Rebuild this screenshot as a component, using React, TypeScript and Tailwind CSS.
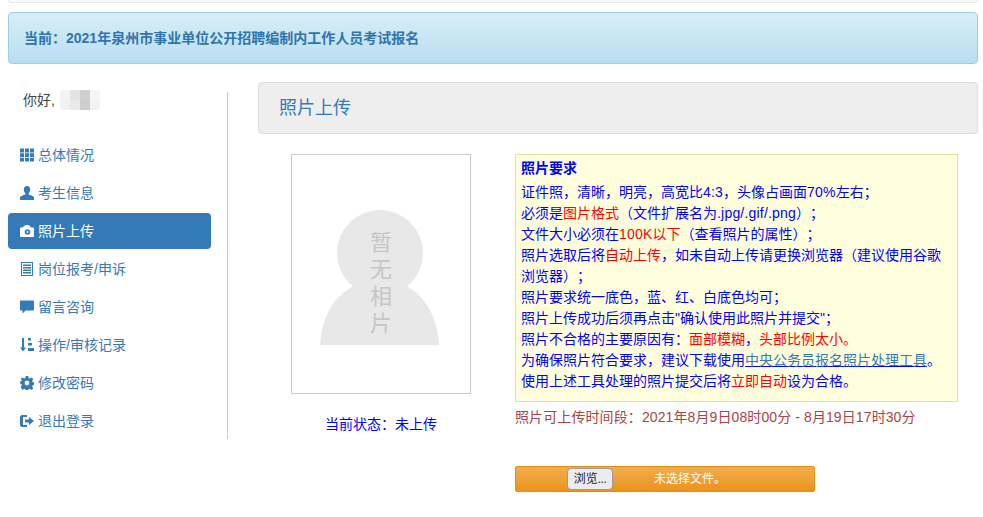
import type { ReactNode } from 'react';

const font = '[font-family:"Liberation_Sans","Noto_Sans_CJK_SC",sans-serif]';

function Svg({ children }: { children: ReactNode }) {
  return (
    <svg viewBox="0 0 14 14" className="w-[14px] h-[14px] shrink-0 fill-current">
      {children}
    </svg>
  );
}

const icons = {
  th: (
    <Svg>
      <path d="M0 .5h4V4.500H0zM5 .5h4V4.500H5zM10 .5h4V4.500h-4zM0 5.300h4v3.700H0zM5 5.300h4v3.700H5zM10 5.300h4v3.700h-4zM0 9.700h4v3.800H0zM5 9.700h4v3.800H5zM10 9.700h4v3.800h-4z" />
    </Svg>
  ),
  user: (
    <Svg>
      <path d="M7 0c2 0 3.200 1.500 3.200 3.600 0 1.600-.7 3-1.600 3.800v1.200c1.800.6 4.600 1.500 5.400 2.600V14H0v-2.800c.8-1.100 3.600-2 5.400-2.600V7.400c-.9-.8-1.600-2.200-1.600-3.800C3.800 1.500 5 0 7 0z" />
    </Svg>
  ),
  camera: (
    <Svg>
      <path
        fillRule="evenodd"
        d="M3.500 2.500 5.500 1h3.500l2 2.500h2c.6 0 1 .4 1 1V12c0 .6-.4 1-1 1H1c-.6 0-1-.4-1-1V4.500c0-.6.4-1 1-1h1.500zM7.500 5.200a2.800 2.800 0 1 0 0 5.600 2.800 2.800 0 0 0 0-5.600zm0 1.800a1 1 0 1 1 0 2 1 1 0 0 1 0-2z"
      />
    </Svg>
  ),
  list: (
    <Svg>
      <path
        fillRule="evenodd"
        d="M1 0h12v14H1zM2 1v12h10V1zM3 2.500h8V4H3zM3 5h8v1.500H3zM3 7.500h8V9H3zM3 10h8v1.500H3z"
      />
    </Svg>
  ),
  comment: (
    <Svg>
      <path d="M1 .5h12c.6 0 1 .4 1 1v8c0 .6-.4 1-1 1H5.500L2.500 13.500v-3H1c-.6 0-1-.4-1-1v-8c0-.6.4-1 1-1z" />
    </Svg>
  ),
  sort: (
    <Svg>
      <path d="M2 0h2v9.500h2L3 13.500 0 9.500h2zM8 0h3v2.500H8zM8 5h4v2.500H8zM8 10h6v3H8z" />
    </Svg>
  ),
  cog: (
    <Svg>
      <path
        fillRule="evenodd"
        d="M5.800 0h2.400l.4 2.100 1.200.5 1.800-1.200 1.700 1.700-1.200 1.800.5 1.200 1.900.4v2.400l-1.900.4-.5 1.200 1.200 1.800-1.700 1.700-1.800-1.200-1.200.5-.4 1.600H5.800l-.4-1.600-1.200-.5-1.800 1.200L.7 10.900l1.200-1.800-.5-1.200L-.5 7.500V5.600l1.900-.4.500-1.200L.7 3.100l1.700-1.700 1.800 1.200 1.200-.5zM7 4.600a2.400 2.400 0 1 0 0 4.800 2.400 2.400 0 0 0 0-4.800z"
      />
    </Svg>
  ),
  logout: (
    <Svg>
      <path d="M2 1h5v2H3v8h4v2H2c-1 0-2-1-2-2V3c0-1 1-2 2-2zM9 3l5 4-5 4V8.500H5v-3h4z" />
    </Svg>
  ),
};

const nav = [
  { label: '总体情况', icon: icons.th },
  { label: '考生信息', icon: icons.user },
  { label: '照片上传', icon: icons.camera, active: true },
  { label: '岗位报考/申诉', icon: icons.list },
  { label: '留言咨询', icon: icons.comment },
  { label: '操作/审核记录', icon: icons.sort },
  { label: '修改密码', icon: icons.cog },
  { label: '退出登录', icon: icons.logout },
];

const mosaic = ['bg-[#f3f3f3]', 'bg-[#e4e4e4]', 'bg-[#cfcfcf]', 'bg-[#f5f5f5]', 'bg-[#f1f1f1]', 'bg-[#e9e9e9]', 'bg-[#cdcdcd]', 'bg-[#f2f2f2]'];

function Red({ children }: { children: ReactNode }) {
  return <span className="text-[#ff0000]">{children}</span>;
}

// latin runs were a touch wider in the shot
function En({ children }: { children: ReactNode }) {
  return <span className="tracking-[0.2px]">{children}</span>;
}

export default function App() {
  return (
    <div className={`w-[983px] h-[517px] overflow-hidden bg-white text-[14px] [text-spacing-trim:space-all] pl-2 pr-[5px] ${font}`}>
      <div className="h-[3px] border border-t-0 border-[#e7e7e7] rounded-b-[4px] bg-[#fafafa]" />

      <div className="mt-[9px] h-[52px] flex items-center px-[15px] border border-[#9acfea] rounded-[4px] bg-gradient-to-b from-[#d9edf7] to-[#b9def0] text-[#2f74ae] font-bold">
        当前：2021年泉州市事业单位公开招聘编制内工作人员考试报名
      </div>

      <div className="flex mt-[18px]">
        <aside className="w-[220px] mt-[10px] h-[347px] border-r border-[#ccc] shrink-0">
          <div className="h-[20px] -mt-[2px] flex items-center pl-[15px] text-[#444]">
            <span className="w-[37px]">你好,</span>
            <span className="grid grid-cols-4 w-[40px] h-[20px] rounded-[4px] overflow-hidden">
              {mosaic.map((c, i) => (
                <span key={i} className={c} />
              ))}
            </span>
          </div>
          <nav className="mt-[27px] w-[203px] flex flex-col gap-[2px]">
            {nav.map((item) => (
              <a
                key={item.label}
                className={`h-[36px] flex items-center gap-[4px] pl-[12px] rounded-[4px] ${
                  item.active ? 'bg-[#337ab7] text-white' : 'text-[#337ab7]'
                }`}
              >
                {item.icon}
                {item.label}
              </a>
            ))}
          </nav>
        </aside>

        <main className="ml-[30px] flex-1">
          <div className="h-[52px] flex items-center pl-[20px] border border-[#ddd] rounded-[4px] bg-[#eeeeee] text-[18px] text-[#337ab7]">
            照片上传
          </div>

          <div className="flex mt-[20px]">
            <div className="ml-[33px] w-[180px] shrink-0">
              <div className="relative h-[240px] border border-[#ccc] bg-white">
                <svg viewBox="0 0 178 238" className="w-[178px] h-[238px]">
                  <circle cx="88" cy="98" r="43" fill="#e8e8e8" />
                  <path d="M28 190C30 150 55 125 88 125s57 25 59 65z" fill="#e8e8e8" />
                </svg>
                <div className="absolute left-0 right-0 top-[74px] flex flex-col items-center text-[22px] leading-[27px] text-[#c6c6c6]">
                  <span>暂</span>
                  <span>无</span>
                  <span>相</span>
                  <span>片</span>
                </div>
              </div>
              <div className="mt-[20px] text-center text-[#0000ff] leading-[20px]">当前状态：未上传</div>
            </div>

            <div className="ml-[44px] w-[443px]">
              <div className="h-[248px] border border-[#e4e19f] bg-[#ffffdd] px-[5px] pt-[3px] text-[#0000ff] leading-[21px]">
                <div className="font-bold mb-[3px]">照片要求</div>
                <div>
                  证件照，清晰，明亮，高宽比<En>4:3</En>，头像占画面<En>70%</En>左右；
                </div>
                <div>
                  必须是<Red>图片格式</Red>（文件扩展名为<En>.jpg/.gif/.png</En>）；
                </div>
                <div>
                  文件大小必须在
                  <Red>
                    <En>100K</En>以下
                  </Red>
                  （查看照片的属性）；
                </div>
                <div>
                  照片选取后将<Red>自动上传</Red>，如未自动上传请更换浏览器（建议使用谷歌
                </div>
                <div>浏览器）；</div>
                <div>照片要求统一底色，蓝、红、白底色均可；</div>
                <div>照片上传成功后须再点击"确认使用此照片并提交"；</div>
                <div>
                  照片不合格的主要原因有：<Red>面部模糊</Red>，<Red>头部比例太小。</Red>
                </div>
                <div>
                  为确保照片符合要求，建议下载使用
                  <a className="text-[#337ab7] underline decoration-[#0000ff]">中央公务员报名照片处理工具</a>。
                </div>
                <div>
                  使用上述工具处理的照片提交后将<Red>立即自动</Red>设为合格。
                </div>
              </div>
              <div className="mt-[5px] text-[#a94442] leading-[20px] tracking-[0.1px]">
                照片可上传时间段：2021年8月9日08时00分 - 8月19日17时30分
              </div>
              <div className="mt-[39px] w-[300px] h-[26px] flex items-center pl-[51px] border border-[#e38d13] rounded-[2px] bg-gradient-to-b from-[#f0ad4e] to-[#eb9316] text-[12px] text-white">
                <button className="w-[46px] h-[22px] border border-[#9a9aa0] rounded-[4px] bg-[#ebebf0] text-[#222] text-center">
                  浏览<span className="tracking-[-0.5px]">...</span>
                </button>
                <span className="ml-[41px]">未选择文件。</span>
              </div>
            </div>
          </div>
        </main>
      </div>
    </div>
  );
}
